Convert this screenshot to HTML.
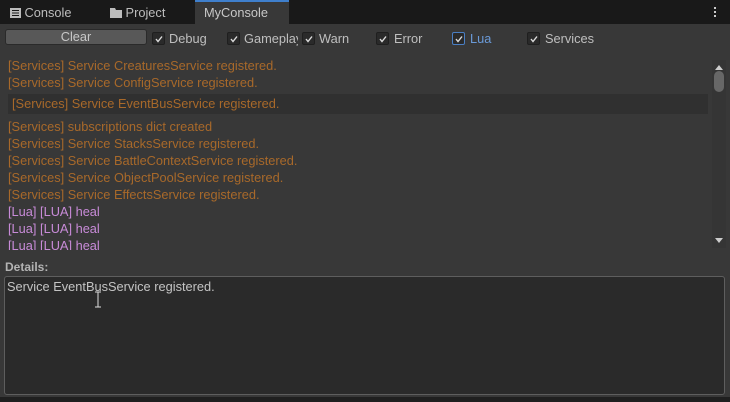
<!DOCTYPE html>
<html><head><style>
*{margin:0;padding:0;box-sizing:border-box}
body{width:730px;height:402px;background:#383838;font-family:"Liberation Sans",sans-serif;font-size:12.8px;position:relative;overflow:hidden;color:#c4c4c4}
.tabs{position:absolute;left:0;top:0;width:730px;height:24px;background:#191919}
.tab{position:absolute;top:0;height:24px;line-height:26px;color:#bdbdbd;font-size:12.8px}
.act{left:195px;width:94px;background:#383838;border-top:2px solid #3f7fcc;line-height:22px;padding-left:9px;color:#c8c8c8}
.cb{position:absolute;top:32px;width:13px;height:13px;border:1px solid #1f1f1f;background:#2a2a2a;border-radius:2px}
.cb svg{position:absolute;left:1px;top:1px}
.lbl{position:absolute;top:31px;color:#bfbfbf;font-size:12.8px}
.line{position:absolute;left:8px;color:#a8692a;white-space:nowrap}
.lua{color:#c88bd8}
</style></head><body>
<div class="tabs">
 <div class="tab" style="left:10px"><svg width="11" height="10" style="vertical-align:-1px"><rect x="0" y="0" width="11" height="10" fill="#bdbdbd"/><path d="M2 2.5h7M2 5h7M2 7.5h7" stroke="#191919" stroke-width="1"/></svg> Console</div>
 <div class="tab" style="left:110px"><svg width="12" height="10" style="vertical-align:-1px"><path d="M0 0h5l1 2h6v8H0z" fill="#bdbdbd"/></svg> Project</div>
 <div class="tab act">MyConsole</div>
 <div style="position:absolute;left:714px;top:7px;width:3px;height:11px"><div style="width:2px;height:2px;background:#ccc;margin-bottom:2px"></div><div style="width:2px;height:2px;background:#ccc;margin-bottom:2px"></div><div style="width:2px;height:2px;background:#ccc"></div></div>
</div>
<div style="position:absolute;left:5px;top:29px;width:142px;height:16px;background:#585858;border:1px solid #2a2a2a;border-radius:3px;text-align:center;line-height:14px;color:#c8c8c8">Clear</div>
<div class="cb" style="left:152px"><svg width="10" height="10"><path d="M2 5l2 2.5 4-5" stroke="#ddd" stroke-width="1.4" fill="none"/></svg></div><div class="lbl" style="left:169px">Debug</div>
<div class="cb" style="left:227px"><svg width="10" height="10"><path d="M2 5l2 2.5 4-5" stroke="#ddd" stroke-width="1.4" fill="none"/></svg></div><div class="lbl" style="left:244px;width:54px;overflow:hidden;white-space:nowrap">Gameplay</div>
<div class="cb" style="left:302px"><svg width="10" height="10"><path d="M2 5l2 2.5 4-5" stroke="#ddd" stroke-width="1.4" fill="none"/></svg></div><div class="lbl" style="left:319px">Warn</div>
<div class="cb" style="left:376px"><svg width="10" height="10"><path d="M2 5l2 2.5 4-5" stroke="#ddd" stroke-width="1.4" fill="none"/></svg></div><div class="lbl" style="left:394px">Error</div>
<div class="cb" style="left:452px;border-color:#4a7fc4"><svg width="10" height="10"><path d="M2 5l2 2.5 4-5" stroke="#ddd" stroke-width="1.4" fill="none"/></svg></div><div class="lbl" style="left:470px;color:#6a9ad8">Lua</div>
<div class="cb" style="left:527px"><svg width="10" height="10"><path d="M2 5l2 2.5 4-5" stroke="#ddd" stroke-width="1.4" fill="none"/></svg></div><div class="lbl" style="left:545px">Services</div>
<div style="position:absolute;left:0;top:56px;width:712px;height:194px;overflow:hidden">
 <div style="position:absolute;left:8px;top:38px;width:700px;height:20px;background:#303030"></div>
 <div class="line" style="top:2px">[Services] Service CreaturesService registered.</div>
 <div class="line" style="top:19px">[Services] Service ConfigService registered.</div>
 <div class="line" style="top:40px;left:12px">[Services] Service EventBusService registered.</div>
 <div class="line" style="top:63px">[Services] subscriptions dict created</div>
 <div class="line" style="top:80px">[Services] Service StacksService registered.</div>
 <div class="line" style="top:97px">[Services] Service BattleContextService registered.</div>
 <div class="line" style="top:114px">[Services] Service ObjectPoolService registered.</div>
 <div class="line" style="top:131px">[Services] Service EffectsService registered.</div>
 <div class="line lua" style="top:148px">[Lua] [LUA] heal</div>
 <div class="line lua" style="top:165px">[Lua] [LUA] heal</div>
 <div class="line lua" style="top:182px">[Lua] [LUA] heal</div>
</div>
<div style="position:absolute;left:712px;top:60px;width:14px;height:188px;background:#353535">
 <div style="position:absolute;left:3px;top:5px;width:0;height:0;border-left:4px solid transparent;border-right:4px solid transparent;border-bottom:5px solid #ccc"></div>
 <div style="position:absolute;left:2px;top:11px;width:10px;height:21px;background:#676767;border-radius:5px"></div>
 <div style="position:absolute;left:3px;top:178px;width:0;height:0;border-left:4px solid transparent;border-right:4px solid transparent;border-top:5px solid #ccc"></div>
</div>
<div style="position:absolute;left:5px;top:260px;font-weight:bold;color:#b4b4b4;font-size:12px">Details:</div>
<div style="position:absolute;left:4px;top:276px;width:721px;height:119px;background:#2a2a2a;border:1px solid #5e5e5e;border-radius:3px;padding:2px 2px;color:#c4c4c4">Service EventBusService registered.</div>
<svg style="position:absolute;left:94px;top:291px" width="8" height="17"><path d="M1 1h6M4 1v15M1 16h6" stroke="#ddd" stroke-width="1"/></svg>
<div style="position:absolute;left:0;top:397px;width:730px;height:5px;background:#1f1f1f"></div>
</body></html>
